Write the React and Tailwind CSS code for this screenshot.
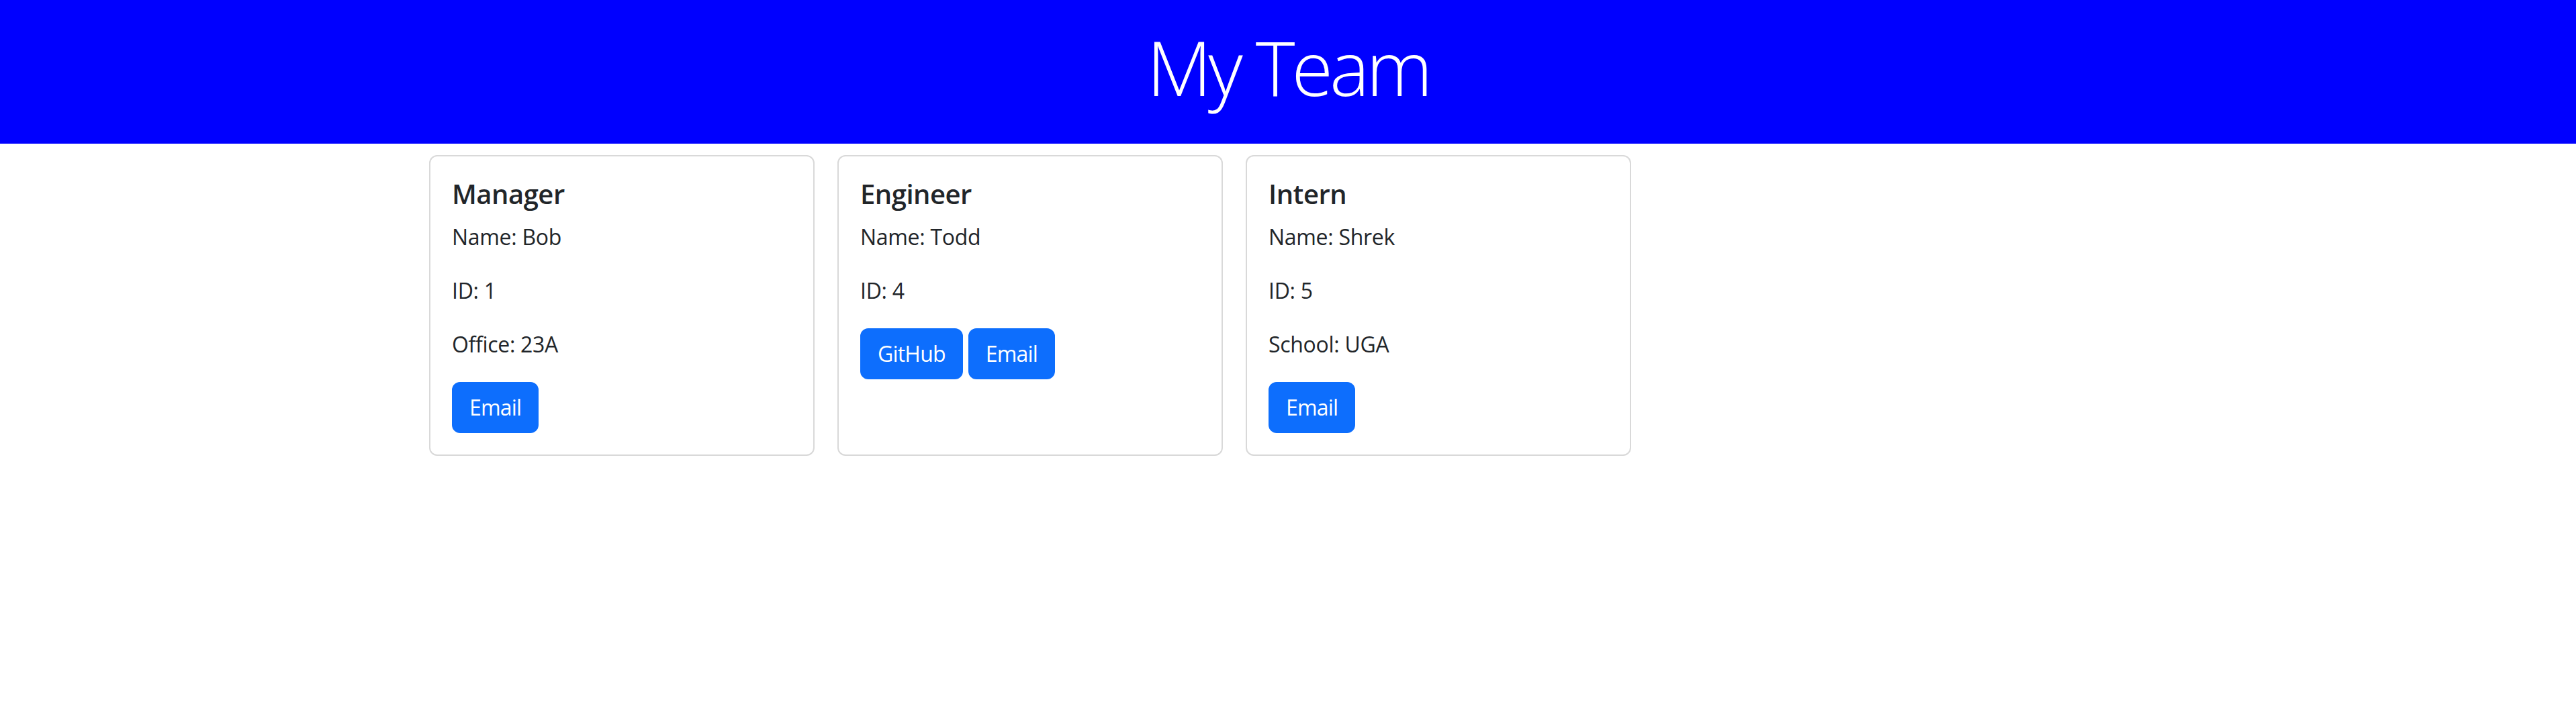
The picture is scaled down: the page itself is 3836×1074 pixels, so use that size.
const team = [
  { role: 'Manager', name: 'Bob', id: 1, extra: 'Office: 23A', github: false },
  { role: 'Engineer', name: 'Todd', id: 4, extra: null, github: true },
  { role: 'Intern', name: 'Shrek', id: 5, extra: 'School: UGA', github: false },
]

function Button({ children }) {
  return (
    <a
      href="#"
      className="inline-block rounded-[12px] border-2 border-[#0d6efd] bg-[#0d6efd] px-[24px] py-[12px] text-[32px] leading-[48px] tracking-[-0.8px] text-white"
    >
      {children}
    </a>
  )
}

function Card({ member }) {
  return (
    <div className="w-[574px] rounded-[12px] border-2 border-[#d9d9d9] bg-white p-[32px]">
      <h5 className="mb-[16px] text-[40px] font-semibold leading-[48px] tracking-[-0.5px] text-[#212529]">{member.role}</h5>
      <p className="mb-[32px] text-[32px] leading-[48px] tracking-[-0.3px]">Name: {member.name}</p>
      <p className="mb-[32px] text-[32px] leading-[48px] tracking-[-0.3px]">ID: {member.id}</p>
      {member.extra && <p className="mb-[32px] text-[32px] leading-[48px] tracking-[-0.3px]">{member.extra}</p>}
      <div className="flex gap-[8px]">
        {member.github && <Button>GitHub</Button>}
        <Button>Email</Button>
      </div>
    </div>
  )
}

export default function App() {
  return (
    <div className="min-h-screen bg-white text-[#212529] font-['Open_Sans',sans-serif]">
      <header className="h-[214px] bg-[#0000ff] pt-[33px] text-center text-white">
        <h1 className="text-[112px] font-light leading-[134px] tracking-[-5px]">My Team</h1>
      </header>
      <div className="flex items-stretch gap-[34px] pl-[639px] pt-[17px]">
        {team.map((m) => (
          <Card key={m.role} member={m} />
        ))}
      </div>
    </div>
  )
}
